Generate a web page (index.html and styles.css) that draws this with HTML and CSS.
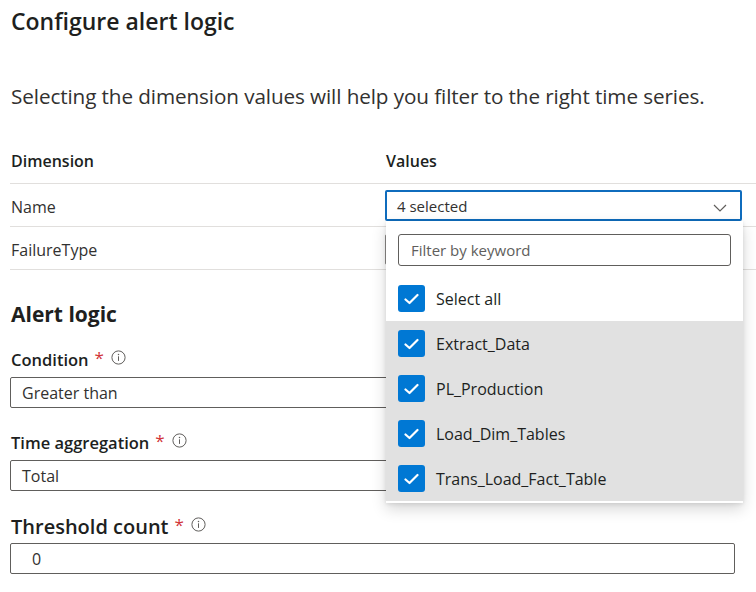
FILE: index.html
```html
<!DOCTYPE html>
<html>
<head>
<meta charset="utf-8">
<link rel="stylesheet" href="styles.css">
</head>
<body>
<div class="page">
  <h1 class="title">Configure alert logic</h1>
  <p class="subtitle">Selecting the dimension values will help you filter to the right time series.</p>

  <div class="dim-table">
    <div class="row head">
      <div class="col-dim">Dimension</div>
      <div class="col-val">Values</div>
    </div>
    <div class="row">
      <div class="col-dim">Name</div>
      <div class="col-val">
        <div class="dropdown open">
          <span>4 selected</span>
          <svg class="chev" width="14" height="8" viewBox="0 0 14 8"><path d="M1 1 L7 7 L13 1" fill="none" stroke="#605e5c" stroke-width="1.2"/></svg>
          <div class="panel">
            <div class="filter">Filter by keyword</div>
            <div class="opt"><span class="cb"><svg width="15" height="12" viewBox="0 0 15 12"><path d="M1.5 6.5 L5.5 10 L13.5 2" fill="none" stroke="#fff" stroke-width="2.2" stroke-linecap="round" stroke-linejoin="round"/></svg></span>Select all</div>
            <div class="opt sel"><span class="cb"><svg width="15" height="12" viewBox="0 0 15 12"><path d="M1.5 6.5 L5.5 10 L13.5 2" fill="none" stroke="#fff" stroke-width="2.2" stroke-linecap="round" stroke-linejoin="round"/></svg></span>Extract_Data</div>
            <div class="opt sel"><span class="cb"><svg width="15" height="12" viewBox="0 0 15 12"><path d="M1.5 6.5 L5.5 10 L13.5 2" fill="none" stroke="#fff" stroke-width="2.2" stroke-linecap="round" stroke-linejoin="round"/></svg></span>PL_Production</div>
            <div class="opt sel"><span class="cb"><svg width="15" height="12" viewBox="0 0 15 12"><path d="M1.5 6.5 L5.5 10 L13.5 2" fill="none" stroke="#fff" stroke-width="2.2" stroke-linecap="round" stroke-linejoin="round"/></svg></span>Load_Dim_Tables</div>
            <div class="opt sel"><span class="cb"><svg width="15" height="12" viewBox="0 0 15 12"><path d="M1.5 6.5 L5.5 10 L13.5 2" fill="none" stroke="#fff" stroke-width="2.2" stroke-linecap="round" stroke-linejoin="round"/></svg></span>Trans_Load_Fact_Table</div>
          </div>
        </div>
      </div>
    </div>
    <div class="row">
      <div class="col-dim">FailureType</div>
      <div class="col-val"><div class="dropdown"></div></div>
    </div>
  </div>

  <h2 class="section">Alert logic</h2>

  <div class="field">
    <div class="label">Condition<span class="req">*</span><svg class="info" width="15" height="15" viewBox="0 0 15 15"><circle cx="7.5" cy="7.5" r="6.6" fill="none" stroke="#605e5c" stroke-width="1"/><rect x="7" y="6.3" width="1" height="4.6" fill="#605e5c"/><circle cx="7.5" cy="4.4" r="0.75" fill="#605e5c"/></svg></div>
    <div class="input">Greater than</div>
  </div>
  <div class="field">
    <div class="label">Time aggregation<span class="req">*</span><svg class="info" width="15" height="15" viewBox="0 0 15 15"><circle cx="7.5" cy="7.5" r="6.6" fill="none" stroke="#605e5c" stroke-width="1"/><rect x="7" y="6.3" width="1" height="4.6" fill="#605e5c"/><circle cx="7.5" cy="4.4" r="0.75" fill="#605e5c"/></svg></div>
    <div class="input">Total</div>
  </div>
  <div class="field last">
    <div class="label big">Threshold count<span class="req">*</span><svg class="info" width="15" height="15" viewBox="0 0 15 15"><circle cx="7.5" cy="7.5" r="6.6" fill="none" stroke="#605e5c" stroke-width="1"/><rect x="7" y="6.3" width="1" height="4.6" fill="#605e5c"/><circle cx="7.5" cy="4.4" r="0.75" fill="#605e5c"/></svg></div>
    <div class="input num">0</div>
  </div>
</div>
</body>
</html>
```

FILE: styles.css
```css
* { box-sizing: border-box; }
html, body { margin: 0; padding: 0; background: #fff; }
body {
  font-family: "Segoe UI", "Open Sans", "Noto Sans", sans-serif;
  color: #323130;
  width: 756px;
  height: 592px;
  overflow: hidden;
}
.page {
  padding-left: 10px;
  width: 766px;
}
.title {
  margin: 0;
  height: 42px;
  line-height: 42px;
  font-size: 23px;
  font-weight: 600;
  color: #201f1e;
  padding-left: 1px;
}
.subtitle {
  margin: 34px 0 0;
  height: 42px;
  line-height: 40px;
  font-size: 20.7px;
  padding-left: 1px;
  white-space: nowrap;
  letter-spacing: -0.1px;
}
.dim-table {
  margin-top: 22px;
}
.row {
  display: flex;
  height: 43px;
  border-bottom: 1px solid #e1dfdd;
  align-items: center;
  font-size: 16px;
  padding-top: 3px;
}
.row.head {
  font-weight: 600;
  color: #201f1e;
  height: 44px;
  padding-top: 0;
  padding-bottom: 2px;
}
.col-dim {
  width: 375px;
  padding-left: 1px;
}
.col-val {
  flex: 1;
  position: relative;
}
.row.head .col-val { padding-left: 1px; }
.dropdown {
  position: relative;
  width: 357px;
  height: 31px;
  border: 1px solid #8a8886;
  border-radius: 2px;
  font-size: 15px;
  display: flex;
  align-items: center;
  padding-left: 11px;
}
.dropdown.open {
  border: 2px solid #0f6cbd;
  padding-left: 10px;
  margin-top: -2px;
}
.chev {
  position: absolute;
  right: 13px;
  top: 12px;
}
.panel {
  position: absolute;
  left: -1px;
  top: 29px;
  width: 357px;
  height: 282px;
  background: #fff;
  box-shadow: 0 6px 14px rgba(0,0,0,0.16), 0 1px 4px rgba(0,0,0,0.10);
  padding-top: 13px;
  z-index: 5;
}
.filter {
  margin: 0 12px 10px;
  height: 32px;
  border: 1px solid #605e5c;
  border-radius: 3px;
  font-size: 15px;
  color: #605e5c;
  display: flex;
  align-items: center;
  padding-left: 12px;
}
.opt {
  display: flex;
  align-items: center;
  height: 45px;
  padding-left: 12px;
  font-size: 16px;
  color: #201f1e;
}
.opt.sel { background: #e1e1e1; }
.cb {
  width: 27px;
  height: 27px;
  background: #0078d4;
  border-radius: 3px;
  display: flex;
  align-items: center;
  justify-content: center;
  margin-right: 11px;
}
.section {
  margin: 22px 0 0;
  height: 44px;
  line-height: 44px;
  font-size: 21px;
  font-weight: 700;
  color: #201f1e;
  padding-left: 1px;
}
.field { margin-top: 6px; }
.label {
  display: flex;
  align-items: center;
  height: 34px;
  margin-bottom: 1px;
  font-size: 16.5px;
  font-weight: 600;
  color: #201f1e;
  padding-left: 1px;
}
.label.big { font-size: 20px; height: 33px; margin-bottom: 0; }
.req {
  color: #d13438;
  margin-left: 6px;
  font-weight: 400;
  font-size: 17px;
  position: relative;
  top: -2px;
}
.info { margin-left: 7px; position: relative; top: -2px; }
.field + .field { margin-top: 17px; }
.field.last { margin-top: 19px; }
.input {
  width: 725px;
  height: 31px;
  border: 1px solid #605e5c;
  border-radius: 2px;
  display: flex;
  align-items: center;
  padding-left: 11px;
  font-size: 16px;
}
.input.num { padding-left: 21px; }
```
